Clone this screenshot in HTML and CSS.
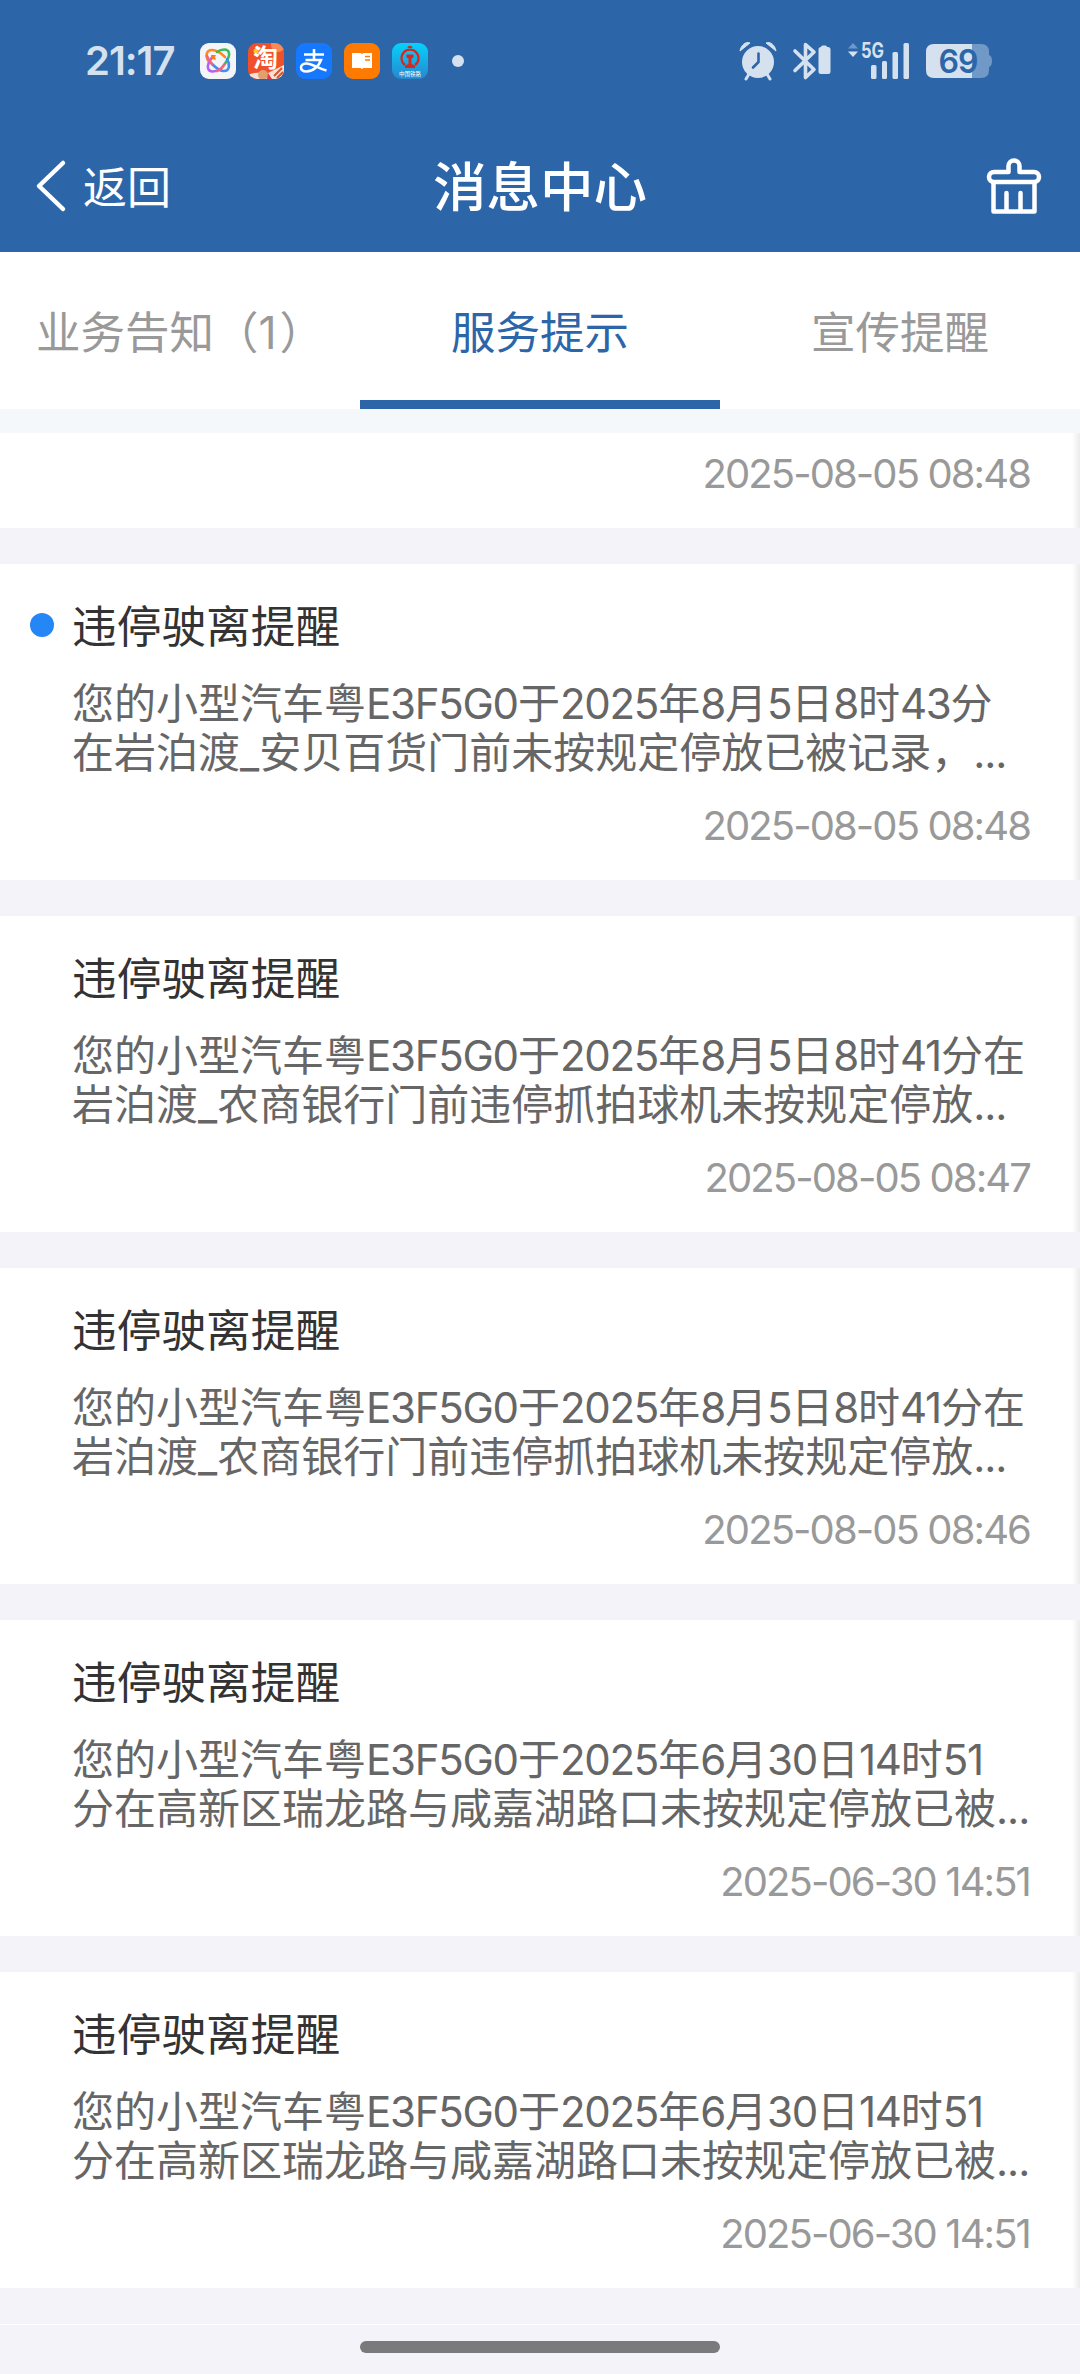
FILE: index.html
```html
<!DOCTYPE html>
<html lang="zh-CN">
<head>
    <meta charset="UTF-8">
    <meta name="viewport" content="width=device-width, initial-scale=1.0">
    <title>消息中心</title>
    <link rel="stylesheet" href="styles.css">
</head>
<body>
    <header class="header">
        <div class="status-bar">
            <span class="time">21:17</span>
            <div class="apps">
                <svg class="app" viewBox="0 0 36 36">
                    <rect width="36" height="36" rx="9" fill="#f4f5f8"/>
                    <g fill="none" stroke-width="2.6" stroke-linecap="round">
                        <path d="M9 19C5 13 6 7 12 7c5 0 9 3 13 7" stroke="#ff8a1f"/>
                        <path d="M17 9c4-3 11-4 12 1 1 4-2 8-5 12" stroke="#3dba5b"/>
                        <path d="M27 16c3 5 3 12-3 12-4 0-8-3-12-7" stroke="#3f8df5"/>
                        <path d="M20 26c-4 3-11 4-12-1-1-4 2-8 5-12" stroke="#b061f2"/>
                        <path d="M24 22c-2 3-4 5-7 6M12 21c-2-2-4-5-5-8" stroke="#f2657f"/>
                    </g>
                    <path d="M11 12h5l-1 2 1 3-4-1z" fill="#ff7a1a"/>
                </svg>
                <svg class="app" viewBox="0 0 36 36">
                    <defs>
                        <clipPath id="round"><rect width="36" height="36" rx="9"/></clipPath>
                    </defs>
                    <g clip-path="url(#round)">
                        <rect width="36" height="36" fill="#f0502a"/>
                        <circle cx="30" cy="2" r="7" fill="#f98a55"/>
                        <path d="M0 32q8-4 18-1l18-9v14H0z" fill="#f7e3d6"/>
                        <circle cx="15" cy="32" r="5" fill="#e0a070"/>
                        <path d="M2 33l6 3H2zM20 30l4 6h-5z" fill="#e8334a"/>
                        <path d="M26 33l8-8M29 35l6-6" stroke="#e0502a" stroke-width="2"/>
                        <circle cx="8" cy="8" r="2.5" fill="#ffc928"/>
                    </g>
                    <text class="app-text" x="5" y="24" font-size="25" font-weight="700">淘</text>
                </svg>
                <svg class="app" viewBox="0 0 36 36">
                    <rect width="36" height="36" rx="9" fill="#1677ff"/>
                    <g fill="none" stroke="#fff" stroke-width="2.6">
                        <path d="M8 11.500h20M18 6v11M9.500 17H25c-2 6-8 11.500-14.500 11.500-4 0-5.500-2-5.500-4 0-2.500 2.500-4 5.500-4 5 0 12 5 20 7"/>
                    </g>
                </svg>
                <svg class="app" viewBox="0 0 36 36">
                    <rect width="36" height="36" rx="9" fill="#ff7a00"/>
                    <path d="M8 10h8.500l1.500 1 1.500-1H28v15h-8.500L18 26l-1.500-1H8z" fill="#fff"/>
                    <path d="M21 13.500h5M21 17h5" stroke="#ff7a00" stroke-width="1.3"/>
                </svg>
                <svg class="app" viewBox="0 0 36 36">
                    <defs>
                        <linearGradient id="rail" x1="0" y1="0" x2="0" y2="1">
                            <stop offset="0" stop-color="#06d2fb"/>
                            <stop offset="1" stop-color="#2687cf"/>
                        </linearGradient>
                    </defs>
                    <rect width="36" height="36" rx="9" fill="url(#rail)"/>
                    <path d="M13 22a8.500 8.500 0 1 1 10 0" fill="none" stroke="#d9261c" stroke-width="2.200"/>
                    <path d="M15.500 5c0-3 5-3 5 0zM14.500 11.500h7v3l-2 1V21l3.500 1.500V25H13v-2.500l3.500-1.500v-5.500l-2-1z" fill="#d9261c"/>
                    <text class="app-text" x="7" y="32.500" font-size="5.500">中国铁路</text>
                </svg>
            </div>
            <span class="more-dot"></span>
            <div class="indicators">
                <svg class="alarm" width="38" height="40" viewBox="0 0 38 40">
                    <path d="M1 10C2 4 7 0 11 2zM37 10C36 4 31 0 27 2z" fill="#d5e1ef" stroke="#d5e1ef" stroke-linejoin="round"/>
                    <path d="M10 33l-3 5M28 33l3 5" stroke="#d5e1ef" stroke-width="3" stroke-linecap="round"/>
                    <circle cx="19" cy="21" r="16" fill="#d5e1ef"/>
                    <path d="M19.500 12.500V21l-5.500 5.500" fill="none" stroke="#2c66a9" stroke-width="2.600" stroke-linecap="round" stroke-linejoin="round"/>
                </svg>
                <svg class="bluetooth" width="38" height="40" viewBox="0 0 38 40">
                    <path d="M2 10l19 18.500-8.500 8V3.500L21 11 2 29.500" fill="none" stroke="#d5e1ef" stroke-width="3.600" stroke-linejoin="round" stroke-linecap="round"/>
                    <path d="M28 6q0-1.500 1.500-1.500h3Q34 4.500 34 6h1q2.500 0 2.500 2.500v22q0 2.500-2.500 2.500h-7q-2.500 0-2.500-2.500v-22Q25.500 6 28 6z" fill="#d5e1ef"/>
                </svg>
                <svg class="signal" width="62" height="40" viewBox="0 0 62 40">
                    <path d="M0 7.500L5 2l5 5.500z" fill="#6f98c7"/>
                    <path d="M0 10.500h10L5 16z" fill="#d5e1ef"/>
                    <text class="net" x="13" y="17" textLength="23" lengthAdjust="spacingAndGlyphs">5G</text>
                    <g fill="#d5e1ef">
                        <rect x="23" y="24" width="5.500" height="14" rx="1.500"/>
                        <rect x="34" y="20" width="5" height="18" rx="1.500"/>
                        <rect x="44.500" y="11" width="5.500" height="27" rx="1.500"/>
                        <rect x="55.500" y="2" width="5.500" height="36" rx="1.500"/>
                    </g>
                </svg>
                <svg class="battery" width="66" height="34" viewBox="0 0 66 34">
                    <path d="M46 0h9q8 0 8 8v3q3 1 3 6t-3 6v3q0 8-8 8h-9z" fill="#7199c8"/>
                    <path d="M8 0h38v34H8q-8 0-8-8V8q0-8 8-8z" fill="#d5e1ef"/>
                    <text class="level" x="32" y="28.500" text-anchor="middle">69</text>
                </svg>
            </div>
        </div>
        <div class="nav">
            <div class="back">
                <svg width="30" height="52" viewBox="0 0 30 52">
                    <path d="M27 3L3 26l24 23" fill="none" stroke="#fff" stroke-width="4.500" stroke-linecap="round" stroke-linejoin="round"/>
                </svg>
                <span>返回</span>
            </div>
            <h1>消息中心</h1>
            <svg class="clean" width="56" height="56" viewBox="0 0 56 56">
                <g fill="none" stroke="#fff" stroke-width="4.500" stroke-linecap="round" stroke-linejoin="round">
                    <path d="M22.500 14V8a5.500 5.500 0 0 1 11 0v6H48a5 5 0 0 1 0 10H8a5 5 0 0 1 0-10z"/>
                    <path d="M7.500 25v28.500h41V25M20.500 35v18M34.500 35v18"/>
                </g>
            </svg>
        </div>
    </header>

    <nav class="tabs">
        <div class="tab">业务告知（<span class="count">1</span>）</div>
        <div class="tab active">服务提示</div>
        <div class="tab">宣传提醒</div>
    </nav>

    <main class="list">
        <div class="card card-cut">
            <div class="date">2025-08-05 08:48</div>
        </div>

        <div class="card unread">
            <h2>违停驶离提醒</h2>
            <p>您的小型汽车粤<span class="num">E3F5G0</span>于<span class="num">2025</span>年<span class="num">8</span>月<span class="num">5</span>日<span class="num">8</span>时<span class="num">43</span>分<br>在岩泊渡_安贝百货门前未按规定停放已被记录，<span class="dots">...</span></p>
            <div class="date">2025-08-05 08:48</div>
        </div>

        <div class="card">
            <h2>违停驶离提醒</h2>
            <p>您的小型汽车粤<span class="num">E3F5G0</span>于<span class="num">2025</span>年<span class="num">8</span>月<span class="num">5</span>日<span class="num">8</span>时<span class="num">41</span>分在<br>岩泊渡_农商银行门前违停抓拍球机未按规定停放<span class="dots">...</span></p>
            <div class="date">2025-08-05 08:47</div>
        </div>

        <div class="card">
            <h2>违停驶离提醒</h2>
            <p>您的小型汽车粤<span class="num">E3F5G0</span>于<span class="num">2025</span>年<span class="num">8</span>月<span class="num">5</span>日<span class="num">8</span>时<span class="num">41</span>分在<br>岩泊渡_农商银行门前违停抓拍球机未按规定停放<span class="dots">...</span></p>
            <div class="date">2025-08-05 08:46</div>
        </div>

        <div class="card">
            <h2>违停驶离提醒</h2>
            <p>您的小型汽车粤<span class="num">E3F5G0</span>于<span class="num">2025</span>年<span class="num">6</span>月<span class="num">30</span>日<span class="num">14</span>时<span class="num">51</span><br>分在高新区瑞龙路与咸嘉湖路口未按规定停放已被<span class="dots">...</span></p>
            <div class="date">2025-06-30 14:51</div>
        </div>

        <div class="card">
            <h2>违停驶离提醒</h2>
            <p>您的小型汽车粤<span class="num">E3F5G0</span>于<span class="num">2025</span>年<span class="num">6</span>月<span class="num">30</span>日<span class="num">14</span>时<span class="num">51</span><br>分在高新区瑞龙路与咸嘉湖路口未按规定停放已被<span class="dots">...</span></p>
            <div class="date">2025-06-30 14:51</div>
        </div>
    </main>

    <footer class="home">
        <div class="home-bar"></div>
    </footer>
</body>
</html>
```
FILE: styles.css
```css
* {
    box-sizing: border-box;
}
body {
    margin: 0;
    width: 1080px;
    height: 2374px;
    overflow: hidden;
    font-family: 'Inter', 'Noto Sans CJK SC', sans-serif;
    background-color: #f4f3f9;
    color: #333;
}
svg {
    display: block;
    flex-shrink: 0;
    overflow: visible;
}

/* Header */
.header {
    height: 252px;
    background-color: #2c66a9;
    color: #fff;
}
.status-bar {
    display: flex;
    align-items: center;
    height: 122px;
    padding: 0 88px 0 85px;
}
.time {
    width: 115px;
    font-size: 40px;
    font-weight: 600;
    line-height: 48px;
    letter-spacing: -1px;
    color: #d5e1ef;
}
.apps {
    display: flex;
    gap: 12px;
}
.app {
    width: 36px;
    height: 36px;
}
.app-text {
    font-family: 'Noto Sans CJK SC', sans-serif;
    fill: #fff;
}
.more-dot {
    width: 12px;
    height: 12px;
    margin-left: 24px;
    border-radius: 50%;
    background-color: #d5e1ef;
}
.indicators {
    display: flex;
    align-items: center;
    margin-left: auto;
}
.bluetooth {
    margin-left: 16px;
}
.signal {
    margin-left: 17px;
}
.battery {
    margin-left: 16px;
}
.net {
    font-size: 21px;
    font-weight: 700;
    fill: #d5e1ef;
}
.level {
    font-size: 32px;
    font-weight: 600;
    letter-spacing: -1px;
    fill: #2c66a9;
}
.nav {
    display: grid;
    grid-template-columns: 1fr auto 1fr;
    align-items: center;
    height: 130px;
    padding: 0 38px 2px 36px;
}
.back {
    display: flex;
    align-items: center;
    gap: 17px;
    font-size: 44px;
    line-height: 60px;
}
.back span {
    padding-top: 3px;
}
.nav h1 {
    margin: 0;
    padding: 4px 0 0 2px;
    font-size: 53.500px;
    font-weight: 500;
    line-height: 70px;
}
.clean {
    justify-self: end;
}

/* Tabs */
.tabs {
    display: flex;
    height: 157px;
    background-color: #fff;
}
.tab {
    flex: 1;
    padding-top: 51px;
    font-size: 44.500px;
    line-height: 60px;
    text-align: center;
    white-space: nowrap;
    color: #999;
}
.tab.active {
    color: #2c66a9;
    border-bottom: 9px solid #2c66a9;
}
.count {
    padding-right: 3px;
}

/* Message list */
.list {
    display: flex;
    flex-direction: column;
    gap: 36px;
    padding-bottom: 36px;
    border-top: 24px solid #f4f8fa;
}
.card {
    position: relative;
    display: flex;
    flex-direction: column;
    height: 316px;
    padding: 37px 50px 30px 72px;
    background: linear-gradient(to left, #ececec, #fff 8px);
}
.card-cut {
    height: 95px;
    padding-top: 0;
    justify-content: flex-end;
}
.card h2 {
    margin: 0;
    font-size: 44.700px;
    font-weight: 400;
    line-height: 52px;
}
.card p {
    margin: 26px 0 0;
    font-size: 42px;
    line-height: 49.300px;
    white-space: nowrap;
    color: #666;
}
.num {
    letter-spacing: -1.250px;
}
.dots {
    letter-spacing: -1px;
}
.date {
    margin-top: auto;
    font-size: 40px;
    line-height: 48px;
    letter-spacing: -1.900px;
    text-align: right;
    color: #999;
}
/* unread mark sits in the left padding of the card */
.unread::before {
    content: "";
    position: absolute;
    left: 30px;
    top: 49px;
    width: 24px;
    height: 24px;
    border-radius: 50%;
    background-color: #2586f5;
}

/* Home indicator */
.home {
    display: flex;
    justify-content: center;
    height: 50px;
    padding-top: 16px;
    border-top: 1px solid #fff;
}
.home-bar {
    width: 360px;
    height: 12px;
    border-radius: 6px;
    background-color: #7a7a7c;
}
```
